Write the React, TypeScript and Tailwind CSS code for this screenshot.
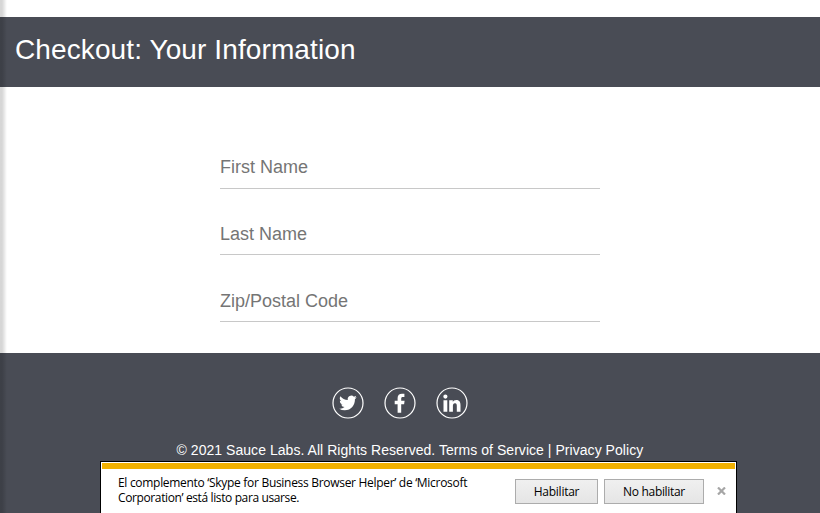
import React from "react";

function Field({ label, className, inputClassName }: { label: string; className: string; inputClassName: string }) {
  return (
    <div className={`h-[43px] border-b border-[#c8c8c8] ${className}`}>
      <input
        type="text"
        placeholder={label}
        className={`block w-full bg-transparent p-0 text-[18px] text-[#757575] outline-none placeholder:text-[#757575] ${inputClassName}`}
      />
    </div>
  );
}

function SocialIcon({ children }: { children: React.ReactNode }) {
  return (
    <svg viewBox="0 0 32 32" className="size-8 text-white" fill="currentColor">
      <circle cx="16" cy="16" r="15" fill="none" stroke="currentColor" strokeWidth="1.2" />
      {children}
    </svg>
  );
}

function Notification() {
  return (
    <div className="absolute top-[461px] left-[100px] h-[60px] w-[637px] border border-black bg-white p-px font-['Open_Sans','Noto_Sans',sans-serif] text-[12px] text-black">
      <div className="h-[6px] bg-[#f2b100]" />
      <div className="flex items-start pl-4">
        <p className="mt-[6px] w-[397px] leading-[15px] whitespace-nowrap">
          <span className="block tracking-[-0.3px]">El complemento ‘Skype for Business Browser Helper’ de ‘Microsoft</span>
          <span className="block tracking-[-0.38px]">Corporation’ está listo para usarse.</span>
        </p>
        <button className="mt-[10px] h-[25px] w-[83px] border border-[#acacac] bg-linear-to-b from-[#f0f0f0] to-[#e5e5e5] tracking-[-0.25px]">
          Habilitar
        </button>
        <button className="mt-[10px] ml-[6px] h-[25px] w-[100px] border border-[#acacac] bg-linear-to-b from-[#f0f0f0] to-[#e5e5e5] tracking-[-0.32px]">
          No habilitar
        </button>
        <svg viewBox="0 0 9 8" className="mt-[18px] ml-[13px] h-2 w-[9px]" stroke="#a6a6a6" strokeWidth="2.2">
          <path d="M1 .5 8 7.5M8 .5 1 7.5" />
        </svg>
      </div>
    </div>
  );
}

export default function App() {
  return (
    <div className="relative h-[513px] w-[820px] overflow-hidden bg-white pt-[17px] font-['Liberation_Sans',Arial,sans-serif]">
      <header className="flex h-[70px] items-start bg-[#494c55] pt-[17px] pl-[15px]">
        <h1 className="text-[28px] leading-[32px] tracking-[0.11px] whitespace-nowrap text-white">Checkout: Your Information</h1>
      </header>
      <main className="h-[266px] pt-[59px]">
        <form className="mx-auto w-[380px]">
          <Field label="First Name" className="" inputClassName="h-[42px]" />
          <Field label="Last Name" className="mt-[23px]" inputClassName="h-[44px]" />
          <Field label="Zip/Postal Code" className="mt-[24px]" inputClassName="h-[44px]" />
        </form>
      </main>
      <footer className="h-[160px] bg-[#494c55] pt-[34px]">
        <div className="flex gap-5 pl-[332px]">
          <SocialIcon>
            <path transform="translate(7.2 6.8) scale(.73 .76)" d="M23.95 4.57a10 10 0 0 1-2.82.77 4.96 4.96 0 0 0 2.16-2.72c-.95.56-2 .96-3.13 1.18a4.92 4.92 0 0 0-8.38 4.48C7.69 8.1 4.07 6.13 1.64 3.16a4.92 4.92 0 0 0 1.52 6.57 4.9 4.9 0 0 1-2.23-.61v.06a4.92 4.92 0 0 0 3.95 4.83 5 5 0 0 1-2.21.08 4.94 4.94 0 0 0 4.6 3.42A9.87 9.87 0 0 1 0 19.54a14 14 0 0 0 7.55 2.21c9.05 0 14-7.5 14-13.98 0-.21 0-.42-.02-.63a9.94 9.94 0 0 0 2.42-2.57z" />
          </SocialIcon>
          <SocialIcon>
            <path d="M13.6 25.7v-8.5h-2.9v-3.5h2.9V11c0-2.9 1.7-4.3 4.4-4.3 1.2 0 2.1.1 2.4.1v3.1h-1.6c-1.3 0-1.6.6-1.6 1.5v2.3h3.4l-.5 3.5h-2.9v8.5z" />
          </SocialIcon>
          <SocialIcon>
            <path d="M7.5 13.3h3.8v11.5H7.5zM9.4 7.5a2.1 2.1 0 1 1 0 4.2 2.1 2.1 0 0 1 0-4.2zM13.2 13.3h3.6v1.6c.5-.9 1.7-1.9 3.4-1.9 3.6 0 4.3 2.4 4.3 5.5v6.3h-3.7v-5.5c0-1.3 0-3-1.8-3s-2.1 1.4-2.1 2.9v5.6h-3.7z" />
          </SocialIcon>
        </div>
        <p className="mt-[23px] pl-[176.5px] text-[14px] leading-[16px] tracking-[0.045px] whitespace-nowrap text-white">
          © 2021 Sauce Labs. All Rights Reserved. Terms of Service | Privacy Policy
        </p>
      </footer>
      <div className="pointer-events-none absolute inset-y-0 left-0 w-[7px] bg-linear-to-r from-black/16 from-30% to-transparent" />
      <Notification />
    </div>
  );
}
